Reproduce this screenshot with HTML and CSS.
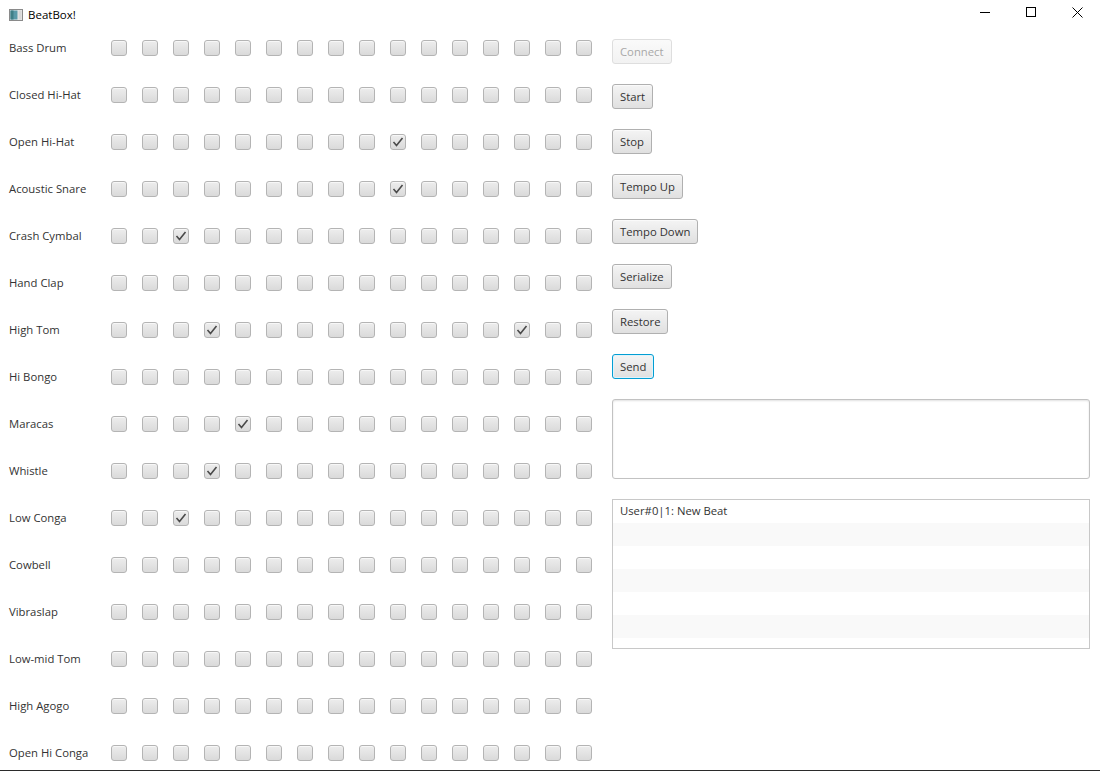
FILE: index.html
```html
<!DOCTYPE html>
<html>
<head>
<meta charset="utf-8">
<title>BeatBox!</title>
<link rel="stylesheet" href="styles.css">
</head>
<body>
<div class="window">
  <div class="titlebar">
    <svg class="app-icon" width="14" height="12" viewBox="0 0 14 12">
      <rect x="0.5" y="0.5" width="13" height="11" fill="#e8e8e8" stroke="#8a8a8a"/>
      <rect x="1.5" y="1.5" width="7" height="9" fill="#5a9aa8"/>
      <rect x="1.5" y="1.5" width="3" height="9" fill="#3f7f86"/>
      <rect x="9.5" y="1.5" width="3" height="9" fill="#d8d8d8"/>
    </svg>
    <span class="title">BeatBox!</span>
    <div class="controls">
      <div class="ctl"><svg width="10" height="10" viewBox="0 0 10 10"><line x1="0" y1="5.5" x2="10" y2="5.5" stroke="#000" stroke-width="1"/></svg></div>
      <div class="ctl"><svg width="10" height="10" viewBox="0 0 10 10"><rect x="0.5" y="0.5" width="9" height="9" fill="none" stroke="#000" stroke-width="1"/></svg></div>
      <div class="ctl"><svg width="11" height="11" viewBox="0 0 11 11"><path d="M0.5 0.5 L10.5 10.5 M10.5 0.5 L0.5 10.5" stroke="#000" stroke-width="1"/></svg></div>
    </div>
  </div>
  <div class="content">
    <div class="grid" id="grid"></div>
    <div class="side">
      <button class="btn disabled">Connect</button>
      <button class="btn">Start</button>
      <button class="btn">Stop</button>
      <button class="btn">Tempo Up</button>
      <button class="btn">Tempo Down</button>
      <button class="btn">Serialize</button>
      <button class="btn">Restore</button>
      <button class="btn focused">Send</button>
      <div class="textarea"></div>
      <div class="list">
        <div class="row">User#0|1: New Beat</div>
        <div class="row odd"></div>
        <div class="row"></div>
        <div class="row odd"></div>
        <div class="row"></div>
        <div class="row odd"></div>
        <div class="row"></div>
      </div>
    </div>
  </div>
  <div class="bottom-line"></div>
</div>
<script>
(function(){
  var names = ["Bass Drum","Closed Hi-Hat","Open Hi-Hat","Acoustic Snare","Crash Cymbal","Hand Clap","High Tom","Hi Bongo","Maracas","Whistle","Low Conga","Cowbell","Vibraslap","Low-mid Tom","High Agogo","Open Hi Conga"];
  var checked = {"2-9":1,"3-9":1,"4-2":1,"6-3":1,"6-13":1,"8-4":1,"9-3":1,"10-2":1};
  var grid = document.getElementById('grid');
  var check = '<svg width="12" height="10" viewBox="0 0 12 10"><path d="M1.5 5 L4.5 8.5 L10.5 1" fill="none" stroke="#4a4a4a" stroke-width="1.6"/></svg>';
  names.forEach(function(n, r){
    var lab = document.createElement('div');
    lab.className = 'label';
    lab.textContent = n;
    grid.appendChild(lab);
    for (var c = 0; c < 16; c++) {
      var b = document.createElement('div');
      b.className = 'cb';
      if (checked[r + '-' + c]) b.innerHTML = check;
      grid.appendChild(b);
    }
  });
})();
</script>
</body>
</html>
```
FILE: styles.css
```css
html, body {
  margin: 0;
  padding: 0;
  background: #ffffff;
}
body {
  font-family: "Open Sans", "Noto Sans", sans-serif;
  font-size: 11.3px;
  color: #333333;
  width: 1100px;
  height: 772px;
  overflow: hidden;
}
.window {
  display: flex;
  flex-direction: column;
  height: 772px;
}
.titlebar {
  height: 30px;
  display: flex;
  align-items: center;
  flex-shrink: 0;
}
.app-icon {
  margin-left: 9px;
  margin-right: 5px;
  margin-top: -1px;
}
.title {
  font-size: 11.5px;
  color: #000;
  margin-top: -2px;
}
.controls {
  margin-left: auto;
  display: flex;
  height: 30px;
}
.ctl {
  width: 46px;
  height: 30px;
  display: flex;
  align-items: center;
  justify-content: center;
  margin-top: -3px;
}
.content {
  display: flex;
  height: 740px;
  flex-shrink: 0;
}
.grid {
  display: grid;
  grid-template-columns: 87px repeat(16, 16px);
  grid-auto-rows: 16px;
  column-gap: 15px;
  row-gap: 31px;
  padding: 10px 0 0 9px;
  align-items: center;
  margin-right: 20px;
}
.grid .label {
  grid-column: 1;
  white-space: nowrap;
  font-size: 11.3px;
  color: #333;
  line-height: 16px;
  margin-top: -1px;
}
.cb {
  width: 16px;
  height: 16px;
  box-sizing: border-box;
  border: 1px solid #b4b4b4;
  border-radius: 3px;
  background: linear-gradient(#ededed, #dadada);
  box-shadow: inset 0 1px 0 #f7f7f7;
  display: flex;
  align-items: center;
  justify-content: center;
}
.side {
  display: flex;
  flex-direction: column;
  align-items: flex-start;
  gap: 20px;
  padding-top: 9px;
  width: 478px;
}
.btn {
  font-family: "Open Sans", "Noto Sans", sans-serif;
  font-size: 11.3px;
  color: #333;
  height: 25px;
  padding: 0 7px;
  box-sizing: border-box;
  border: 1px solid #b0b0b0;
  border-radius: 3px;
  background: linear-gradient(#f4f4f4, #e0e0e0);
  box-shadow: inset 0 1px 0 #fafafa;
  line-height: 21px;
  margin: 0;
}
.btn.disabled {
  color: #a8a8a8;
  border-color: #dedede;
  background: linear-gradient(#fafafa, #f2f2f2);
}
.btn.focused {
  border-color: #039ed3;
  box-shadow: inset 0 0 0 1px #dff3fb;
}
.textarea {
  width: 478px;
  height: 80px;
  box-sizing: border-box;
  border: 1px solid #c2c2c2;
  border-radius: 3px;
  background: #fff;
  box-shadow: inset 0 1px 2px rgba(0,0,0,0.12);
}
.list {
  width: 478px;
  height: 150px;
  box-sizing: border-box;
  border: 1px solid #c8c8c8;
  background: #fff;
  overflow: hidden;
}
.row {
  height: 23px;
  line-height: 22px;
  padding-left: 7px;
  color: #333;
}
.row.odd {
  background: #f9f9f9;
}
.bottom-line {
  height: 1px;
  background: #2b2b2b;
  flex-shrink: 0;
}
```
